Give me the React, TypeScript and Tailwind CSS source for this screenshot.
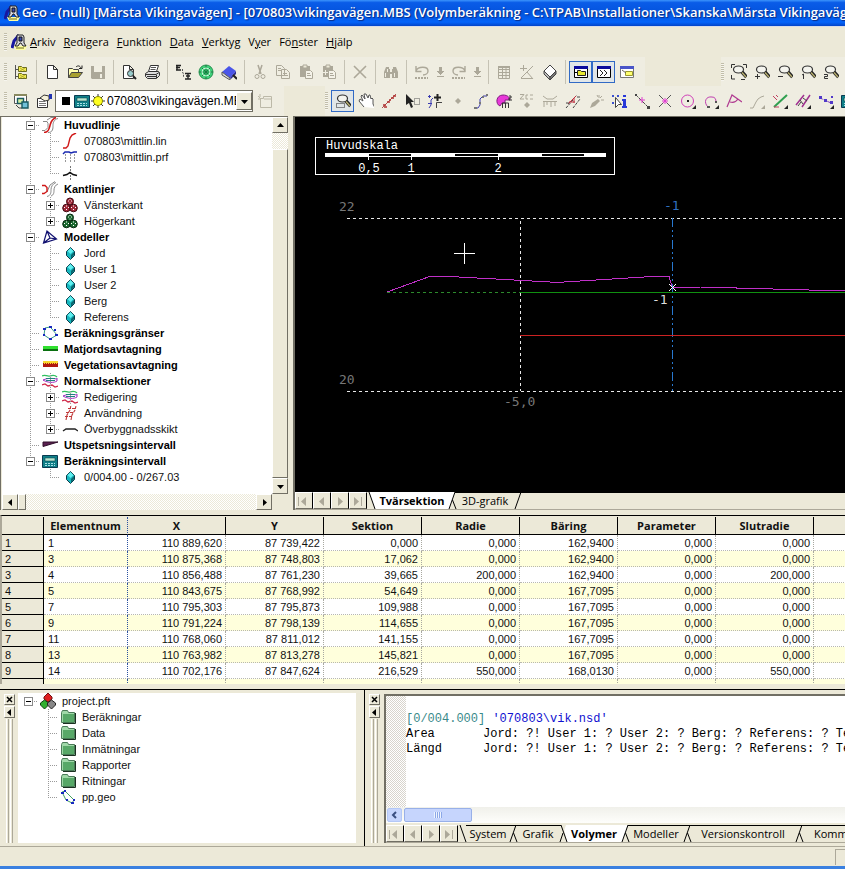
import type { ReactNode } from "react";

const UI = "font-['Open_Sans','Noto_Sans',sans-serif]";
const SANS = "font-['Liberation_Sans',Arial,sans-serif]";
const MONO = "font-['Liberation_Mono','Courier_New',monospace]";
const RAISED = "border border-t-white border-l-white border-r-[#716f64] border-b-[#716f64] bg-[#ece9d8]";
const HATCH =
  "bg-[repeating-conic-gradient(#ffffff_0_25%,#ece9d8_0_50%)] bg-[length:2px_2px]";

function Svg({ children, w = 16, h = 16, smooth = false }: { children: ReactNode; w?: number; h?: number; smooth?: boolean }) {
  return (
    <svg
      width={w}
      height={h}
      viewBox={`0 0 ${w} ${h}`}
      fill="none"
      stroke="#000"
      shapeRendering={smooth ? "auto" : "crispEdges"}
      className="block shrink-0"
      aria-hidden="true"
    >
      {children}
    </svg>
  );
}

const magnifier = (
  <>
    <ellipse cx="7.500" cy="5.500" rx="5" ry="3.500" fill="#f4f4ee" stroke="#333" strokeWidth="1.200" />
    <path d="M11 8l4.500 5" stroke="#222" strokeWidth="3.500" />
    <path d="M11 8.500l4 4.500" stroke="#b9b070" strokeWidth="1.400" />
  </>
);

const tri = <path d="M16 12v4h-4z" fill="#222" stroke="none" />;

const clipboard = (
  <>
    <path d="M2 2h10v11H2z" fill="#aca899" stroke="none" />
    <path d="M5 1h4v3H5z" fill="#ece9d8" stroke="#aca899" />
    <path d="M7.500 6.500h5l2 2v6h-7z" fill="#f4f2e8" stroke="#aca899" />
    <path d="M9 9.500h3M9 11.500h4" stroke="#aca899" />
  </>
);

const downArrow = (
  <Svg w={8}>
    <path d="M3 3h3v4h2L4.500 11 1 7h2zM1 12h7v1H1z" fill="#aca899" stroke="none" />
  </Svg>
);

const ICONS: Record<string, ReactNode> = {
  tree: (
    <>
      <path d="M2.500 1v14M2.500 5.500H6M2.500 12.500H6" stroke="#555" />
      <path d="M5.500 2.500h3l1 1h4v4h-8zM5.500 9.500h3l1 1h4v4h-8z" fill="#f2ee50" stroke="#6a6a20" />
      <path d="M7 4l5 3M12 4L7 7M7 11l5 3M12 11l-5 3" stroke="#a8a030" strokeWidth=".8" />
    </>
  ),
  newFile: <path d="M3.500 1.500h6l4 4v9h-10zM9.500 1.500v4h4" fill="#fff" stroke="#333" />,
  open: (
    <>
      <path d="M1.500 13.500v-9h4l1 1h5v3" fill="#ffffb0" stroke="#444" />
      <path d="M1.500 13.500l3-5h11l-4 5z" fill="#a8a030" stroke="#444" />
      <path d="M9 3c2-2 4-1 5 1M12 4.500h3v-3" stroke="#222" />
    </>
  ),
  save: (
    <>
      <path d="M1 2h14v13H2l-1-1z" fill="#aca899" stroke="none" />
      <path d="M4 2h8v6H4zM10 10h2v4h-2z" fill="#f0eee2" stroke="none" />
    </>
  ),
  preview: (
    <>
      <path d="M2.500 1.500h6l4 4v9h-10zM8.500 1.500v4h4" fill="#fff" stroke="#333" />
      <circle cx="9.500" cy="9.500" r="3" fill="#9cc" stroke="#333" />
      <path d="M12 12l3 3" stroke="#222" strokeWidth="2" />
    </>
  ),
  print: (
    <>
      <path d="M4.500 7.500l2-6h8l-2 6" fill="#fff" stroke="#333" />
      <path d="M7 3.500h5M6.500 5.500h5" stroke="#555" />
      <path d="M1.500 9.500l3-2h10l1 1v3l-3 3h-9l-2-2z" fill="#ddd" stroke="#333" />
      <path d="M1 10.500h11l3-2M3 12.500h9M12.500 11v3" stroke="#333" />
    </>
  ),
  elem: (
    <>
      <path d="M1 1.500h5M2 1v5M1 3.500h4M1 6h5" stroke="#222" strokeWidth="1.400" />
      <path d="M7.500 5v3l1 2v3" stroke="#555" strokeDasharray="2 1" />
      <path d="M10 9.500h6M13 9v6M10 15h6M11 12h4" stroke="#222" strokeWidth="1.400" />
    </>
  ),
  globe: (
    <>
      <circle cx="8" cy="8" r="7" fill="#3fd07a" stroke="#2a9050" />
      <path d="M8 1v14M1 8h14M4 4l8 8M12 4l-8 8" stroke="#1a7a40" />
      <circle cx="8" cy="8" r="4" stroke="#c8f8d8" />
    </>
  ),
  book: (
    <>
      <path d="M1 8l7-6 7 5-6 7z" fill="#4a55e8" stroke="none" />
      <path d="M1 8v3l8 5v-2z" fill="#ddd" stroke="#555" />
      <path d="M9 14l6-7v3l-5 5" fill="#2a2a90" stroke="none" />
      <path d="M12 11l4 4" stroke="#222" strokeWidth="2" />
    </>
  ),
  cut: (
    <>
      <path d="M6 1l3 9M10 1L7 10" stroke="#aca899" strokeWidth="1.500" />
      <circle cx="5" cy="12.500" r="2" stroke="#aca899" />
      <circle cx="11" cy="12.500" r="2" stroke="#aca899" />
    </>
  ),
  copy: (
    <>
      <path d="M1.500 1.500h5l3 3v7h-8zM6.500 5.500h5l3 3v6h-8z" fill="#f0eee2" stroke="#aca899" />
      <path d="M3 4.500h3M3 6.500h3M8 9.500h4M8 11.500h5" stroke="#aca899" />
    </>
  ),
  paste: clipboard,
  pasteMore: (
    <>
      {clipboard}
      <path d="M4.500 6v5M2 8.500h5" stroke="#f0eee2" />
    </>
  ),
  del: <path d="M2 2l12 12M14 2L2 14" stroke="#aca899" strokeWidth="1.600" />,
  find: (
    <>
      <path d="M3 3h3v2h1v9H1V8zM10 3h3l2 5v6H9V5h1z" fill="#aca899" stroke="none" />
      <path d="M6 7h4v3H6z" fill="#aca899" stroke="none" />
      <path d="M2.500 9v4M4.500 5v3M11.500 9v4M7 7.500h2" stroke="#f0eee2" />
    </>
  ),
  undo: (
    <>
      <path d="M2 8V2M1.500 7.500h6M2 7c2-5 12-5 12 0 0 2-2 4-5 4" stroke="#aca899" strokeWidth="1.400" />
      <path d="M1 14h13" stroke="#aca899" strokeWidth="2" strokeDasharray="2 1" />
    </>
  ),
  redo: (
    <>
      <path d="M14 8V2M14.500 7.500h-6M14 7C12 2 2 2 2 7c0 2 2 4 5 4" stroke="#aca899" strokeWidth="1.400" />
      <path d="M1 14h13" stroke="#aca899" strokeWidth="2" strokeDasharray="2 1" />
    </>
  ),
  grid: (
    <>
      <path d="M2.500 2.500h11v12h-11zM6.500 2v12M10 2v12M2 5.500h12M2 8.500h12M2 11.500h12" stroke="#aca899" />
      <path d="M2 2h12v2H2z" fill="#aca899" stroke="none" />
    </>
  ),
  calcXY: <path d="M4.500 1v6M1 4.500h7M2 14L14 2M8 8l6 7M2 14.500h12" stroke="#aca899" />,
  eraser: (
    <>
      <path d="M2 7l6-6 6 6-6 6z" fill="#fff" stroke="#444" />
      <path d="M2 7l6 6v3L2 10z" fill="#bbb" stroke="#444" />
      <path d="M14 7v3l-6 6v-3z" fill="#777" stroke="#444" />
    </>
  ),
  winFolder: (
    <>
      <path d="M1.500 2.500h13v11h-13z" fill="#fff" stroke="#000" />
      <path d="M1 2h14v3H1z" fill="#0a0a9c" stroke="none" />
      <path d="M4.500 6.500h3l1 1h4v4h-8z" fill="#e8e830" stroke="#222" />
      <path d="M1 8.500h3" stroke="#000" />
    </>
  ),
  winPrompt: (
    <>
      <path d="M1.500 2.500h13v11h-13z" fill="#fff" stroke="#000" />
      <path d="M1 2h14v3H1z" fill="#0a0a9c" stroke="none" />
      <path d="M4 6l3 3-3 3M8 6l3 3-3 3" stroke="#222" />
    </>
  ),
  winNote: (
    <>
      <path d="M1.500 2.500h13v11h-13z" fill="#fff" stroke="#777" />
      <path d="M1 2h14v3H1z" fill="#4a55c8" stroke="none" />
      <path d="M6.500 7.500h7v4h-7z" fill="#ffff70" stroke="#999930" />
      <path d="M3 6l4 3" stroke="#666" />
    </>
  ),
  zoomAll: (
    <>
      {magnifier}
      <path d="M.5 4V.5H4M12 .5h3.500V4M.5 11v4H4M10 15.500h4" stroke="#333" />
    </>
  ),
  zoomIn: (
    <>
      {magnifier}
      <path d="M3.500 10v5M1 12.500h5" stroke="#333" />
    </>
  ),
  zoomOut: (
    <>
      {magnifier}
      <path d="M1 12.500h5" stroke="#333" />
    </>
  ),
  zoomOne: (
    <>
      {magnifier}
      <path d="M2 11l1.500-1v5" stroke="#333" />
    </>
  ),
  zoomTwo: (
    <>
      {magnifier}
      <path d="M1 10.500h3.500v2H1.500v2H5" stroke="#333" />
    </>
  ),
  zoomWin: (
    <>
      {magnifier}
      <path d="M1.500 10.500h8v4h-8z" stroke="#222" strokeDasharray="1 1" />
    </>
  ),
  layers: (
    <>
      <path d="M1.500 1.500h12v9h-12z" fill="#fff" stroke="#555" />
      <path d="M1 1h13v2H1z" fill="#8a8a60" stroke="none" />
      <path d="M4.500 5.500h6v5h-6z" fill="#d8f0a0" stroke="#1a5a60" strokeWidth="1.400" />
      <path d="M9 9h6v6H9z" fill="#70c0d8" stroke="#1a5a60" strokeWidth="1.400" />
      <path d="M3 12l3 3h3" stroke="#444" />
    </>
  ),
  props: (
    <>
      <path d="M1.500 5.500h10v9h-10z" fill="#fff" stroke="#333" />
      <path d="M3 8.500h6M3 10.500h7M3 12.500h7" stroke="#777" />
      <path d="M4 5l4-3 5 1v4l-4 1z" fill="#f4f0d8" stroke="#333" />
      <path d="M13 1h3v5h-3z" fill="#2233b0" stroke="none" />
    </>
  ),
  tabNew: (
    <>
      <path d="M3.500 14.500v-9h3v-2h8v11z" stroke="#bcb9a8" />
      <path d="M1 3l3 3M3 1v3M1 6h2M7 6h7" stroke="#bcb9a8" />
    </>
  ),
  hand: (
    <path
      d="M6 14l-5-6 1-2 3 2-2-5 1-1 3 4-1-5h2l2 4 1-3h1l1 4 1-1 1 1v5l2 4"
      fill="#fff"
      stroke="#555"
    />
  ),
  redLine: (
    <>
      <path d="M1 15L15 1" stroke="#b05050" />
      <path d="M2 12h3M6 9h3M10 5h3M3 14h3M8 7h2M12 3h3" stroke="#b03030" strokeWidth="1.400" />
    </>
  ),
  select: (
    <>
      <path d="M2 1l8 8H7l2 5-2 1-2-5-3 2z" fill="#222" stroke="none" />
      <path d="M10.500 5.500h5v6h-5z" stroke="#555" strokeDasharray="1 1" />
    </>
  ),
  snap: (
    <>
      <path d="M2 15l2-3V7l2-2" stroke="#3a3ab0" />
      <path d="M1 3.500h3M2.500 2v3M1 10.500h4" stroke="#3a3ab0" />
      <path d="M7 4.500h7M10.500 1v7" stroke="#222" strokeWidth="2" />
      <path d="M9.500 15V9.500H15" stroke="#444" />
    </>
  ),
  dot: <path d="M8 5l3 3-3 3-3-3z" fill="#aca899" stroke="none" />,
  polyline: (
    <>
      <path d="M2 15h3l2-3V6l3-3h4" stroke="#3a3ab0" />
      <path d="M1 14h3v2H1zM6 9h2v2H6zM9 3h2v2H9zM13 1h2v2h-2z" fill="#777" stroke="none" />
    </>
  ),
  area: (
    <>
      <path d="M4 13C-1 11 0 2 7 2c5 0 7 3 7 5H9v3H6z" fill="#e838d8" stroke="#802080" />
      <path d="M6.500 15v-5h6v5M9.500 10v5M13 3h2v2h-2v2h3" stroke="#333" />
    </>
  ),
  zcoord: (
    <>
      <path d="M1 1.500h4L1 6h4M9 2H7v4h2M11 2h3M11 6h3" stroke="#aca899" />
      <path d="M8 9l3 3-3 3-3-3z" fill="#aca899" stroke="none" />
    </>
  ),
  profile: (
    <>
      <path d="M1 3l4 3h6l4-3" stroke="#aca899" />
      <path d="M1 8.500h14M2 8v6M5 8v4M9 8v6M13 8v5" stroke="#aca899" />
    </>
  ),
  hatchLines: (
    <>
      <path d="M1 15L8 7M8 15l7-9M6 8l6-6" stroke="#444" strokeDasharray="3 1" />
      <path d="M4 9h6M9 5v5M3 11l8-8" stroke="#c03040" />
      <path d="M1 10h3M12 4h3" stroke="#444" />
    </>
  ),
  spray: (
    <>
      <path d="M2 15l2-5 6-4 2 2-5 5z" fill="#aca899" stroke="none" />
      <path d="M11 2v3M14 3l-2 2M13 7h3M9 2l1 2" stroke="#aca899" />
    </>
  ),
  info: (
    <>
      <path d="M1 2h2v2H1zM6 2h2v2H6zM1 9h2v2H1z" fill="#3a50d0" stroke="none" />
      <path d="M4.500 4.500v10l3-3h3z" fill="#fff" stroke="#444" />
      <path d="M12 2h3v2h-3zM11 6h4v7h1v2h-5v-2h1V8h-1z" fill="#2838d8" stroke="none" />
    </>
  ),
  pline2: (
    <>
      <path d="M1 1l13 13" stroke="#444" strokeDasharray="4 1" />
      <path d="M5 7h6M8 4v6" stroke="#e040d0" />
      <path d="M1 1h2v2H1zM13 13h3v3h-3z" fill="#444" stroke="none" />
    </>
  ),
  cross: (
    <>
      <path d="M2 2l12 12M14 2L2 14" stroke="#555" />
      <path d="M5 8h6M8 5v6M6 6l4 4M10 6l-4 4" stroke="#e040d0" />
    </>
  ),
  circle: (
    <>
      <circle cx="7.500" cy="8" r="6" stroke="#d040b8" />
      <path d="M7 7h2v2H7z" fill="#222" stroke="none" />
      {tri}
    </>
  ),
  arc: (
    <>
      <path d="M5 14c-5-5-2-11 4-10 3 0 4 2 4 5" stroke="#c040b0" />
      <path d="M4 13h3v2H4zM12 8h2v2h-2z" fill="#555" stroke="none" />
      {tri}
    </>
  ),
  angle: <path d="M1 14L6 2l10 7M4 9c3 1 6 0 8-3" stroke="#b03a90" strokeWidth="1.200" />,
  curve: (
    <>
      <path d="M1 15h3l3-6 2-3 3-2 3-1" stroke="#aca899" />
      <path d="M16 12v4h-4z" fill="#aca899" stroke="none" />
    </>
  ),
  slope: (
    <>
      <path d="M2 14L15 2" stroke="#30a050" strokeWidth="2" />
      <path d="M1 3l4 4M4 2l2 2M2 14h5" stroke="#c04060" />
      {tri}
    </>
  ),
  parallel: (
    <>
      <path d="M1 12L9 2M7 14l8-12" stroke="#a03090" strokeWidth="1.500" />
      <path d="M3 13l3-4M8 5l4 3M5 7l3 4" stroke="#444" />
      {tri}
    </>
  ),
  measure: (
    <>
      <path d="M2 5l11 5" stroke="#8040c0" strokeDasharray="3 1" />
      <path d="M1 3h3v3H1zM6 6h3v3H6zM12 8h3v3h-3zM13 3h2v2h-2z" fill="#5038c8" stroke="none" />
      {tri}
    </>
  ),
  calc: (
    <>
      <path d="M.5 2.500h15v12H.5z" fill="#108088" stroke="#0a3a50" />
      <path d="M3 5h10v3H3z" fill="#b8e8d0" stroke="#063040" strokeWidth=".5" />
      <path d="M3 10.500h10M3 12.500h10" stroke="#a8e0e8" strokeDasharray="2 1" />
    </>
  ),
  geo: (
    <>
      <path d="M1 14l2-7 5-6" stroke="#1818a0" strokeWidth="3" />
      <path d="M3 12h13l-2 4H5z" fill="#ffffa0" stroke="none" />
      <path d="M6 1h6l1 2v6l2 3h-3l-2-3H9l-2 3H4l2-3z" fill="#d8d8e0" stroke="#222" />
      <path d="M8 3h3v4H8z" fill="#3a4ab0" stroke="#111" />
      <path d="M5 14h8" stroke="#6a6a20" />
    </>
  ),
  sun: (
    <>
      <path d="M8 1v14M1 8h14M3 3l10 10M13 3L3 13" stroke="#333" />
      <circle cx="8" cy="8" r="4.500" fill="#ffff20" stroke="#8a8a00" />
    </>
  ),
  // tree icons
  road: (
    <>
      <path d="M1 4.500h4l1 2v4l-3 3H0M6 15.500c5 0 5-4 5-7s1-6 5-7M5 3l4-2.500h5" stroke="#888" />
      <path d="M2 15.500c5 0 5-4 6-7s1-6 6-8" stroke="#d01818" strokeWidth="1.600" />
    </>
  ),
  edges: (
    <>
      <path d="M5 15.500c4-1 4-4 4-7s2-6 5-7M9 15c3-1 3-4 3-6s1-5 4-6M5 11l3-7 5-3.500" stroke="#888" />
      <path d="M0 4.500h3l2 2v4l-3 2H0" stroke="#d01818" strokeWidth="1.400" />
    </>
  ),
  sline: <path d="M1 15h3l2-2 2-8 2-3 4-2" stroke="#d01818" strokeWidth="1.400" />,
  prf: (
    <>
      <path d="M1 5l2-2h4l2 1 3-1h3" stroke="#1828b0" strokeWidth="1.400" />
      <path d="M3.500 5v9M8.500 5v9M12.500 5v9" stroke="#999" strokeDasharray="2 1" />
    </>
  ),
  section: (
    <>
      <path d="M8.500 1v15" stroke="#777" strokeDasharray="2 1" />
      <path d="M1 10.500l4-1 3-2 3 2 4 1" stroke="#111" strokeWidth="1.500" />
    </>
  ),
  ballsRed: balls("#a02838", "#400810"),
  ballsGreen: balls("#1a6a30", "#082810"),
  ballsMix: (
    <>
      <path d="M8 0l4 4v2L8 9 4 6V4z" fill="#e02020" stroke="#701010" />
      <path d="M4.500 7l4 3v2l-4 4-4-4v-2z" fill="#30b030" stroke="#104010" />
      <path d="M11.500 7l4 3v2l-4 4-4-4v-2z" fill="#888" stroke="#222" />
    </>
  ),
  modelTri: <path d="M5 2L1.500 14l13-4zM5 2l3 7 6.500 1M8 9l-6.500 5" stroke="#101070" strokeWidth="1.200" />,
  cube: (
    <>
      <path d="M8.500 2.500l4 4v4l-4 4-4-4v-4z" fill="#18b8c0" stroke="#0a3a48" />
      <path d="M8.500 3l3 3-3 3-3-3z" fill="#60f0f0" stroke="none" />
      <path d="M9 10l3-3v3l-3 4z" fill="#0a6870" stroke="none" />
    </>
  ),
  polygon: (
    <>
      <path d="M3 3l5-1 2 2 5 6-7 4-6-4z" stroke="#3a9a8a" />
      <path d="M1 3h3v2H1zM7 1h3v2H7zM13 9h3v2h-3zM7 13h3v2H7zM1 9h2v2H1zM12 4h2v2h-2z" fill="#1828c0" stroke="none" />
    </>
  ),
  soil: (
    <>
      <path d="M1 5h15v3H1z" fill="#30e030" stroke="none" />
      <path d="M1 8h15v2H1z" fill="#0a7010" stroke="none" />
    </>
  ),
  veg: (
    <>
      <path d="M1 4h15v3H1z" fill="#f8d830" stroke="none" />
      <path d="M1 7h15v3H1z" fill="#b01810" stroke="none" />
      <path d="M1 6.500h15" stroke="#b01810" strokeDasharray="1 1" />
    </>
  ),
  normal: (
    <>
      <path d="M0 3c3-2 5 1 8 0s5-1 7 1" stroke="#30c060" strokeWidth="1.300" />
      <path d="M15 5v3c-3 2-9 2-14-1 4-2 8-2 14-1" stroke="#a030c0" />
      <path d="M4 7.500h9M4 5.500h9" stroke="#208080" />
      <path d="M0 12l3-1 3 2 4-1 3 2 3-1" stroke="#d02848" strokeWidth="1.300" />
      <path d="M8.500 0v15" stroke="#999" strokeDasharray="1 1" />
    </>
  ),
  usage: (
    <path
      d="M4 15l1-5 3-5 1-5M9 15l1-5 3-5 1-4M6 3.500h8M4 7.500h8M3 11.500h8"
      stroke="#c03838"
      strokeWidth="1.100"
      strokeDasharray="3 1"
    />
  ),
  layer: <path d="M1 10l3-2h9l3 2" stroke="#222" strokeWidth="1.400" />,
  wedge: <path d="M1 5h15L1 9.500z" fill="#5a2050" stroke="#30102a" />,
  folder: (
    <>
      <path d="M1.500 3.500l1-2h5l1 2h6v10h-13z" fill="#a0d8a8" stroke="#4a7a58" />
      <path d="M3 5h11v8H3z" fill="#58a868" stroke="none" />
      <path d="M15.500 4v10.500H3" stroke="#1a3020" />
    </>
  ),
  ppgeo: (
    <>
      <path d="M2 3l3-1 9 9-2 3-6-3z" stroke="#40a060" />
      <path d="M1 3h3v2H1zM4 1h2v2H4zM13 10h2v2h-2zM11 13h3v2h-3zM6 10h2v2H6z" fill="#1828c0" stroke="none" />
    </>
  ),
};

function balls(fill: string, edge: string) {
  return (
    <g stroke={edge} fill={fill}>
      <circle cx="8" cy="4.500" r="3.500" />
      <circle cx="4.500" cy="11" r="3.800" />
      <circle cx="11.500" cy="11" r="3.800" />
      <path
        d="M6 4h1M9 4h1M7.500 6h1M7.500 2.500h1M2 10.500h1M4 9h1M6 10.500h1M4 12.500h1M9 10.500h1M11 9h1M13 10.500h1M11 12.500h1"
        stroke="#fff"
        strokeWidth="1"
      />
    </g>
  );
}

function Icon({ name }: { name: string }) {
  return <Svg smooth>{ICONS[name]}</Svg>;
}

function Grip() {
  return (
    <span className="h-[18px] w-[3px] shrink-0 bg-[repeating-linear-gradient(#c1bda9_0_1px,#f6f5ee_1px_2px)]" />
  );
}

function ToolButtons({ items }: { items: string[] }) {
  return (
    <>
      {items.map((item, i) => {
        if (item === "|")
          return (
            <span key={i} className="flex w-2 shrink-0 justify-center">
              <span className="h-6 w-px bg-[#c5c2b4]" />
            </span>
          );
        if (item === "down")
          return (
            <button key={i} aria-label="Historik" className="flex h-[22px] w-[14px] shrink-0 items-center justify-center">
              {downArrow}
            </button>
          );
        const pressed = item.startsWith("*");
        const name = pressed ? item.slice(1) : item;
        return (
          <button
            key={i}
            aria-label={name}
            className={
              "flex h-[22px] w-[23px] shrink-0 items-center justify-center " +
              (pressed ? "border border-[#316ac5] bg-[#e1e6e8]" : "")
            }
          >
            <Icon name={name} />
          </button>
        );
      })}
    </>
  );
}

const MENU = [
  ["", "A", "rkiv"],
  ["", "R", "edigera"],
  ["", "F", "unktion"],
  ["", "D", "ata"],
  ["", "V", "erktyg"],
  ["V", "y", "er"],
  ["Fö", "n", "ster"],
  ["", "H", "jälp"],
];

const TOOLS_A =
  "tree | newFile open save | preview print | elem globe book | cut copy paste pasteMore | del | find | undo down redo down | grid calcXY eraser | *winFolder *winPrompt winNote".split(" ");
const TOOLS_ZOOM = "zoomAll zoomIn zoomOut zoomOne zoomTwo".split(" ");
const TOOLS_DRAW =
  "*zoomWin hand redLine select snap dot polyline area zcoord profile hatchLines spray info pline2 cross circle arc angle curve slope parallel measure calc".split(" ");

type Node = {
  label: string;
  icon: string;
  level: 0 | 1;
  box?: "+" | "-";
  last?: boolean; // last among its siblings
  rail?: boolean; // the root line runs on past this child
};

const MODEL_TREE: Node[] = [
  { label: "Huvudlinje", icon: "road", level: 0, box: "-" },
  { label: "070803\\mittlin.lin", icon: "sline", level: 1, rail: true },
  { label: "070803\\mittlin.prf", icon: "prf", level: 1, rail: true },
  { label: "", icon: "section", level: 1, rail: true, last: true },
  { label: "Kantlinjer", icon: "edges", level: 0, box: "-" },
  { label: "Vänsterkant", icon: "ballsRed", level: 1, box: "+", rail: true },
  { label: "Högerkant", icon: "ballsGreen", level: 1, box: "+", rail: true, last: true },
  { label: "Modeller", icon: "modelTri", level: 0, box: "-" },
  { label: "Jord", icon: "cube", level: 1, rail: true },
  { label: "User 1", icon: "cube", level: 1, rail: true },
  { label: "User 2", icon: "cube", level: 1, rail: true },
  { label: "Berg", icon: "cube", level: 1, rail: true },
  { label: "Referens", icon: "cube", level: 1, rail: true, last: true },
  { label: "Beräkningsgränser", icon: "polygon", level: 0 },
  { label: "Matjordsavtagning", icon: "soil", level: 0 },
  { label: "Vegetationsavtagning", icon: "veg", level: 0 },
  { label: "Normalsektioner", icon: "normal", level: 0, box: "-" },
  { label: "Redigering", icon: "normal", level: 1, box: "+", rail: true },
  { label: "Användning", icon: "usage", level: 1, box: "+", rail: true },
  { label: "Överbyggnadsskikt", icon: "layer", level: 1, box: "+", rail: true, last: true },
  { label: "Utspetsningsintervall", icon: "wedge", level: 0 },
  { label: "Beräkningsintervall", icon: "calc", level: 0, box: "-", last: true },
  { label: "0/004.00 - 0/267.03", icon: "cube", level: 1, last: true },
];

const PROJECT_TREE: Node[] = [
  { label: "project.pft", icon: "ballsMix", level: 0, box: "-", last: true },
  { label: "Beräkningar", icon: "folder", level: 1 },
  { label: "Data", icon: "folder", level: 1 },
  { label: "Inmätningar", icon: "folder", level: 1 },
  { label: "Rapporter", icon: "folder", level: 1 },
  { label: "Ritningar", icon: "folder", level: 1 },
  { label: "pp.geo", icon: "ppgeo", level: 1, last: true },
];

function Branch({ top, bottom, arm, box }: { top: boolean; bottom: boolean; arm: boolean; box?: "+" | "-" }) {
  const art = (
    <Svg w={20}>
      <g stroke="#9a9a9a" strokeDasharray="1 1">
        {top && <path d="M10.500 0v8" />}
        {bottom && <path d="M10.500 8v8" />}
        {arm && <path d="M10 8.500h10" />}
      </g>
      {box && (
        <>
          <path d="M6.500 4.500h8v8h-8z" fill="#fff" stroke="#8a8a8a" />
          <path d={box === "+" ? "M8 8.500h5M10.500 6v5" : "M8 8.500h5"} />
        </>
      )}
    </Svg>
  );
  if (!box) return art;
  return (
    <button aria-label={box === "+" ? "Expandera" : "Fäll ihop"} className="shrink-0">
      {art}
    </button>
  );
}

function Tree({ nodes, boldRoots = false }: { nodes: Node[]; boldRoots?: boolean }) {
  return (
    <ul className={`${SANS} text-[11px] leading-4 text-[#111]`}>
      {nodes.map((n, i) => (
        <li key={i} className="flex h-4 items-center whitespace-nowrap">
          {n.level === 0 ? (
            <Branch top={boldRoots} bottom={boldRoots && !n.last} arm box={n.box} />
          ) : (
            <>
              <Branch top={!!n.rail} bottom={!!n.rail} arm={false} />
              <Branch top bottom={!n.last} arm box={n.box} />
            </>
          )}
          <span className="flex w-5 shrink-0 justify-center">
            <Icon name={n.icon} />
          </span>
          <span className={"pl-1 " + (boldRoots && n.level === 0 ? "font-bold text-black" : "")}>{n.label}</span>
        </li>
      ))}
    </ul>
  );
}

function Arrow({ dir }: { dir: "up" | "down" | "left" | "right" }) {
  const d = {
    up: "M0 5h7L3.500 1z",
    down: "M0 2h7L3.500 6z",
    left: "M5 0v7L1 3.500z",
    right: "M2 0v7l4-3.500z",
  }[dir];
  return (
    <Svg w={7} h={7} smooth>
      <path d={d} fill="#000" stroke="none" />
    </Svg>
  );
}

function ScrollButton({ dir, label }: { dir: "up" | "down" | "left" | "right"; label: string }) {
  return (
    <button aria-label={label} className={`${RAISED} flex size-4 shrink-0 items-center justify-center`}>
      <Arrow dir={dir} />
    </button>
  );
}

function ModelPane() {
  return (
    <section className="flex w-[288px] shrink-0 flex-col border-t border-l border-[#716f64] pl-px">
      <div className="flex min-h-0 flex-1">
        <div className="min-w-0 flex-1 overflow-hidden bg-white pl-[18px]">
          <Tree nodes={MODEL_TREE} boldRoots />
        </div>
        <div className={`${HATCH} flex w-4 flex-col`}>
          <ScrollButton dir="up" label="Rulla upp" />
          <div className="h-4" />
          <div className={`${RAISED} flex-1`} />
          <ScrollButton dir="down" label="Rulla ned" />
        </div>
      </div>
      <div className="flex h-4">
        <div className={`${HATCH} flex flex-1`}>
          <ScrollButton dir="left" label="Rulla vänster" />
          <div className={`${RAISED} w-2`} />
          <div className="flex-1" />
          <ScrollButton dir="right" label="Rulla höger" />
        </div>
        <div className="w-4" />
      </div>
    </section>
  );
}

function SectionDrawing() {
  return (
    <svg className={`${MONO} block min-h-0 w-full flex-1 bg-black`} fill="none" fontSize="12" shapeRendering="crispEdges">
      <rect x="20.500" y="20.500" width="299" height="37" stroke="#fff" />
      <g fill="#fff">
        <text x="31" y="32">Huvudskala</text>
        <text x="74" y="55" textAnchor="middle">0,5</text>
        <text x="116" y="55" textAnchor="middle">1</text>
        <text x="203" y="55" textAnchor="middle">2</text>
        <rect x="30" y="36" width="281" height="4" />
        <path d="M73 40h1v3h-1zM116 40h1v3h-1zM203 40h1v3h-1z" />
      </g>
      <path d="M74 37h42v2H74zM160 37h43v2h-43zM247 37h42v2h-42z" fill="#000" />

      <g stroke="#e8e8e8" strokeDasharray="3 3">
        <line x1="52" y1="101.500" x2="100%" y2="101.500" />
        <line x1="52" y1="274.500" x2="100%" y2="274.500" />
        <line x1="225.500" y1="104" x2="225.500" y2="274" />
      </g>
      <line x1="377.500" y1="101" x2="377.500" y2="274" stroke="#2878d0" strokeDasharray="9 3 2 3 2 3" />
      <g fontSize="13" className="font-['DejaVu_Sans_Mono',monospace]">
        <text x="44" y="94" fill="#777">22</text>
        <text x="44" y="267" fill="#777">20</text>
        <text x="209" y="289" fill="#777">-5,0</text>
        <text x="369" y="93" fill="#3070c0">-1</text>
        <text x="357" y="187" fill="#ddd">-1</text>
      </g>

      <path d="M92 175.500h133" stroke="#2c8a2c" strokeDasharray="3 3" />
      <line x1="225" y1="175.500" x2="100%" y2="175.500" stroke="#109010" />
      <line x1="225" y1="218.500" x2="100%" y2="218.500" stroke="#cc2222" />
      <path d="M92 175l44-16h10l109 6h14l96-6h9l3 11h28l145 4 300 8" stroke="#c030c8" />
      <path d="M374 167l7 7M381 167l-7 7" stroke="#fff" />
      <path d="M169.500 126v21M159 136.500h21" stroke="#fff" />
    </svg>
  );
}

// Slanted edges between two sheet tabs; the active sheet is white.
function Slant({ left, right }: { left: "none" | "idle" | "active"; right: "none" | "idle" | "active" }) {
  const fill = { none: "none", idle: "#ece9d8", active: "#fff" };
  return (
    <svg width="10" height="17" viewBox="0 0 10 17" className="block shrink-0" fill="none" stroke="#000" aria-hidden="true">
      {right !== "none" && (
        <path d={left === "none" ? "M2 0h8v17H8z" : "M5 0h5v17H9z"} fill={fill[right]} stroke="none" />
      )}
      {left !== "none" && <path d="M0 0h8L2 17H0z" fill={fill[left]} stroke="none" />}
      {left !== "none" && <path d={right === "active" ? "M5 8L2 17" : "M8 0L2 17"} />}
      {left === "none" && <path d="M2 0l6 17" />}
      {left !== "none" && right !== "none" && <path d={right === "active" ? "M3 0l6 17" : "M5.500 8L9 17"} />}
      {left === "idle" && right !== "active" && <path d="M0 .5h10" />}
      {left === "idle" && right === "active" && <path d="M0 .5h3" />}
      {left !== "idle" && right === "idle" && <path d="M8 .5h2" />}
    </svg>
  );
}

type Sheet = { name: string; width: string };

function SheetTabs({ tabs, active }: { tabs: Sheet[]; active: string }) {
  const state = (i: number) => (i < 0 || i >= tabs.length ? "none" : tabs[i].name === active ? "active" : "idle");
  const nav = ["M2 4h1v9H2zM10 4v9L5 8.500z", "M10 4v9L5 8.500z", "M6 4v9l5-4.500z", "M4 4v9l5-4.500zM11 4h1v9h-1z"];
  const navLabels = ["Första", "Föregående", "Nästa", "Sista"];
  return (
    <div
      className={`${UI} flex h-[18px] shrink-0 overflow-hidden border-b border-[#aca899] text-[11px] leading-4`}
      role="tablist"
    >
      {nav.map((d, i) => (
        <button
          key={i}
          aria-label={navLabels[i]}
          className="h-[17px] w-[18px] shrink-0 border border-t-white border-r-black border-b-[#716f64] border-l-white bg-[#ece9d8]"
        >
          <Svg w={14} h={17} smooth>
            <path d={d} fill="#aca899" stroke="none" />
          </Svg>
        </button>
      ))}
      <Slant left="none" right={state(0)} />
      {tabs.map((t, i) => (
        <div key={t.name} className="flex shrink-0">
          <button
            role="tab"
            aria-selected={t.name === active}
            className={
              `${t.width} h-[17px] whitespace-nowrap ` +
              (t.name === active ? "bg-white font-bold" : "border-t border-black bg-[#ece9d8]")
            }
          >
            {t.name}
          </button>
          <Slant left={state(i)} right={state(i + 1)} />
        </div>
      ))}
      <span className="flex-1 border-t border-black" />
    </div>
  );
}

const VIEW_TABS: Sheet[] = [
  { name: "Tvärsektion", width: "w-[70px]" },
  { name: "3D-grafik", width: "w-14" },
];

const LOG_TABS: Sheet[] = [
  { name: "System", width: "w-10" },
  { name: "Grafik", width: "w-10" },
  { name: "Volymer", width: "w-[52px]" },
  { name: "Modeller", width: "w-[52px]" },
  { name: "Versionskontroll", width: "w-[102px]" },
  { name: "Kommunikation", width: "w-[102px]" },
];

const COLUMNS = ["Elementnum", "X", "Y", "Sektion", "Radie", "Bäring", "Parameter", "Slutradie", ""];
const ROWS = [
  ["1", "110 889,620", "87 739,422", "0,000", "0,000", "162,9400", "0,000", "0,000"],
  ["3", "110 875,368", "87 748,803", "17,062", "0,000", "162,9400", "0,000", "0,000"],
  ["4", "110 856,488", "87 761,230", "39,665", "200,000", "162,9400", "0,000", "200,000"],
  ["5", "110 843,675", "87 768,992", "54,649", "0,000", "167,7095", "0,000", "0,000"],
  ["7", "110 795,303", "87 795,873", "109,988", "0,000", "167,7095", "0,000", "0,000"],
  ["9", "110 791,224", "87 798,139", "114,655", "0,000", "167,7095", "0,000", "0,000"],
  ["11", "110 768,060", "87 811,012", "141,155", "0,000", "167,7095", "0,000", "0,000"],
  ["13", "110 763,982", "87 813,278", "145,821", "0,000", "167,7095", "0,000", "0,000"],
  ["14", "110 702,176", "87 847,624", "216,529", "550,000", "168,0130", "0,000", "550,000"],
  ["", "", "", "", "", "", "", ""],
];

function ElementTable() {
  return (
    <div className="h-[169px] shrink-0 overflow-hidden border-t border-l-2 border-t-black border-l-[#aca899] bg-[#ece9d8] pt-px">
      <table className="w-[910px] table-fixed border-separate border-spacing-0 text-[11px] text-[#111]">
        <colgroup>
          <col className="w-[42px]" />
          <col className="w-[84px]" />
          {COLUMNS.slice(1).map((_, i) => (
            <col key={i} className="w-[98px]" />
          ))}
        </colgroup>
        <thead>
          <tr className={`${UI} h-[18px] leading-4`}>
            <th className="border-r border-b border-black bg-[#ece9d8] p-0" />
            {COLUMNS.map((c, i) => (
              <th
                key={i}
                className={
                  "border-r border-b border-b-black bg-[#ece9d8] p-0 font-bold " +
                  (i === 0 ? "[border-right-style:dotted] border-r-[#2a50a0]" : "border-r-black")
                }
              >
                {c}
              </th>
            ))}
          </tr>
        </thead>
        <tbody className={SANS}>
          {ROWS.map((row, r) => (
            <tr key={r} className={"h-4 leading-[14px] " + (r % 2 ? "bg-[#ffffdc]" : "bg-white")}>
              <th className="border-r border-b border-black bg-[#ece9d8] p-0 pt-px pl-[3px] text-left font-normal">
                {row[0] ? r + 1 : ""}
              </th>
              {[...row, ""].map((cell, c) => (
                <td
                  key={c}
                  className={
                    "border-r border-b border-dotted border-b-[#b8b8b0] p-0 pt-px " +
                    (c === 0 ? "border-r-[#2a50a0] pl-1 text-left" : "border-r-[#a8a8a0] pr-[3px] text-right")
                  }
                >
                  {cell}
                </td>
              ))}
            </tr>
          ))}
        </tbody>
      </table>
    </div>
  );
}

function DockHandle() {
  return (
    <div className="flex w-[11px] shrink-0 flex-col items-center pt-px">
      <button aria-label="Stäng" className={`${RAISED} flex h-[11px] w-[11px] items-center justify-center`}>
        <Svg w={7} h={7} smooth>
          <path d="M1 1l5 5M6 1L1 6" strokeWidth="1.500" />
        </Svg>
      </button>
      <button aria-label="Minimera" className={`${RAISED} mt-px flex h-[12px] w-[11px] items-center justify-center`}>
        <Arrow dir="left" />
      </button>
      <div className="mt-px flex flex-1 gap-px">
        <span className="w-[3px] border-r border-l border-r-[#aca899] border-l-white" />
        <span className="w-[3px] border-r border-l border-r-[#aca899] border-l-white" />
      </div>
    </div>
  );
}

function Console() {
  const tail = "Jord: ?! User 1: ? User 2: ? Berg: ? Referens: ? Tec";
  return (
    <div className="mt-px flex min-h-0 flex-1 flex-col overflow-hidden border-t-2 border-l-2 border-[#716f64]">
      <div className="flex min-h-0 flex-1 bg-white">
        <div className="w-[20px] shrink-0 bg-[repeating-conic-gradient(#ffffff_0_25%,#d8d4cc_0_50%)] bg-[length:2px_2px]" />
        <div className={`${MONO} pt-4 text-[12px] leading-[15px] whitespace-pre text-black`}>
          <p>
            <span className="text-[#3a8a8a]">[0/004.000]</span> <span className="text-[#1010d0]">'070803\vik.nsd'</span>
          </p>
          {["Area", "Längd"].map((name) => (
            <p key={name} className="flex">
              <span className="w-[77px]">{name}</span>
              <span>{tail}</span>
            </p>
          ))}
        </div>
      </div>
      <div className="flex h-4 shrink-0 bg-[linear-gradient(#f0f0ea,#fefefb)]">
        <button
          aria-label="Rulla vänster"
          className="m-px flex h-[14px] w-[15px] items-center justify-center rounded-[2px] border border-[#b4c8f6] bg-[#c6d5fd]"
        >
          <Svg w={7} h={8} smooth>
            <path d="M5 1L2 4l3 3" stroke="#3a4f80" strokeWidth="2" />
          </Svg>
        </button>
        <div className="m-px flex h-[14px] w-[68px] items-center justify-center rounded-[2px] border border-[#98b0e8] bg-[#c6d5fd]">
          <span className="h-[6px] w-[8px] bg-[repeating-linear-gradient(90deg,#eef4fe_0_1px,#8ca8e8_1px_2px)]" />
        </div>
      </div>
      <div className="h-[2px] shrink-0 bg-[#ece9d8]" />
      <SheetTabs tabs={LOG_TABS} active="Volymer" />
    </div>
  );
}

export default function App() {
  return (
    <div className={`${UI} flex h-screen flex-col overflow-hidden bg-[#ece9d8] text-[11px] text-black select-none`}>
      <header className="flex h-[27px] shrink-0 items-center gap-0.5 border-b border-[#d8dce8] bg-[linear-gradient(#3c94fc_0,#0a5ce8_10%,#0453dd_50%,#0464fa_85%,#0344c8)] pl-1">
        <Icon name="geo" />
        <h1 className="text-[13px] font-semibold whitespace-nowrap text-white [text-shadow:1px_1px_1px_#0a2a80]">
          Geo - (null) [Märsta Vikingavägen] - [070803\vikingavägen.MBS (Volymberäkning - C:\TPAB\Installationer\Skanska\Märsta
          Vikingaväge
        </h1>
      </header>

      <nav className="flex h-[30px] shrink-0 items-center pl-1">
        <Grip />
        <span className="ml-1 mr-[3px]">
          <Icon name="geo" />
        </span>
        <div className="flex gap-2">
          {MENU.map(([pre, key, post]) => (
            <button key={post}>
              {pre}
              <u>{key}</u>
              {post}
            </button>
          ))}
        </div>
      </nav>

      <div className="flex h-[29px] shrink-0 items-center overflow-hidden">
        <div className="flex w-[645px] shrink-0 items-center bg-[#efede1] py-1 pl-1">
          <Grip />
          <span className="w-0.5" />
          <ToolButtons items={TOOLS_A} />
        </div>
        <div className="ml-[76px] flex flex-1 items-center bg-[#efede1] py-1">
          <Grip />
          <span className="w-[3px]" />
          <ToolButtons items={TOOLS_ZOOM} />
        </div>
      </div>

      <div className="flex h-[30px] shrink-0 items-center overflow-hidden">
        <div className="flex w-[284px] shrink-0 items-center bg-[#efede1] py-1 pl-1">
          <Grip />
          <span className="w-0.5" />
          <ToolButtons items={["layers", "props"]} />
          <div className="flex h-[22px] w-[198px] items-center border border-[#716f64] bg-white pl-[6px]">
            <span className="size-2 bg-black" />
            <span className="ml-1">
              <Icon name="calc" />
            </span>
            <Icon name="sun" />
            <select
              aria-label="Aktivt dokument"
              className={`${SANS} ml-px h-5 min-w-0 flex-1 appearance-none bg-white text-[12px] leading-5 text-clip outline-none`}
            >
              <option>070803\vikingavägen.MBS</option>
            </select>
            <span className={`${RAISED} pointer-events-none flex h-[18px] w-4 items-center justify-center`}>
              <Arrow dir="down" />
            </span>
          </div>
          <ToolButtons items={["tabNew"]} />
        </div>
        <div className="ml-[41px] flex flex-1 items-center bg-[#efede1] py-1">
          <Grip />
          <span className="w-[3px]" />
          <ToolButtons items={TOOLS_DRAW} />
        </div>
      </div>

      <main className="flex min-h-0 flex-1 pb-[5px]">
        <ModelPane />
        <section className="ml-[5px] flex min-w-0 flex-1 flex-col border-t border-l-2 border-[#716f64]">
          <SectionDrawing />
          <SheetTabs tabs={VIEW_TABS} active="Tvärsektion" />
        </section>
      </main>

      <ElementTable />
      <div className="h-[5px] shrink-0" />

      <div className="flex h-[158px] shrink-0 border-t border-b border-t-black border-b-[#aca899]">
        <section className="flex w-[364px] shrink-0 gap-[3px] py-[3px] pl-1">
          <DockHandle />
          <div className="mr-2 flex-1 bg-white">
            <Tree nodes={PROJECT_TREE} />
          </div>
        </section>
        <section className="flex min-w-0 flex-1 gap-1 border-l border-black py-[3px] pl-1">
          <DockHandle />
          <Console />
        </section>
      </div>

      <footer className="flex h-[22px] shrink-0 items-end justify-end border-b-[3px] border-[#3a80e0] pb-px">
        <span className="h-4 w-[10px] border-t border-l border-[#aca899]" />
      </footer>
    </div>
  );
}
